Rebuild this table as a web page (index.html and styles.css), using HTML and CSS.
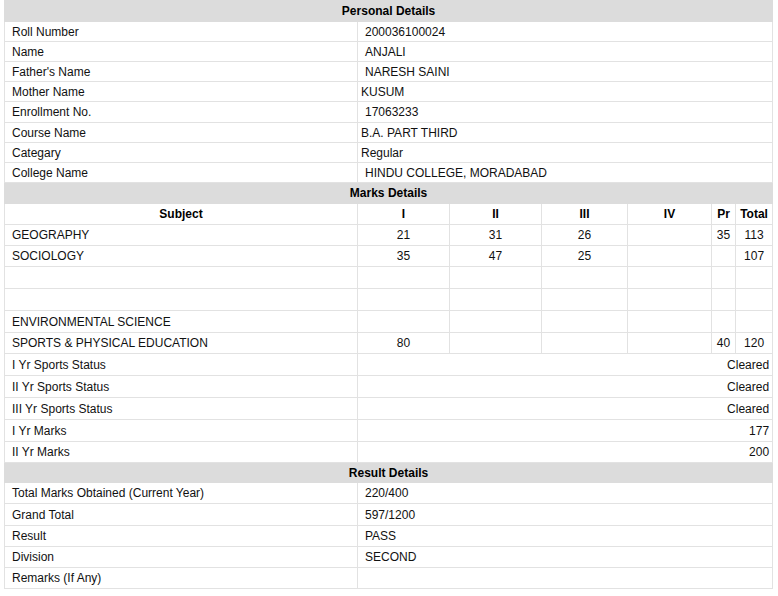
FILE: index.html
```html
<!DOCTYPE html>
<html>
<head>
<meta charset="utf-8">
<link rel="stylesheet" href="styles.css">
</head>
<body>
<div class="wrap">
<table class="result">
  <colgroup>
    <col class="c-sub"><col class="c-1"><col class="c-2"><col class="c-3"><col class="c-4"><col class="c-pr"><col class="c-tot">
  </colgroup>
  <tbody>
    <tr class="h21 sec"><td colspan="7">Personal Details</td></tr>
    <tr class="h20"><td>Roll Number</td><td colspan="6" class="val">200036100024</td></tr>
    <tr class="h20"><td>Name</td><td colspan="6" class="val">ANJALI</td></tr>
    <tr class="h20"><td>Father's Name</td><td colspan="6" class="val">NARESH SAINI</td></tr>
    <tr class="h20"><td>Mother Name</td><td colspan="6" class="val tight">KUSUM</td></tr>
    <tr class="h21"><td>Enrollment No.</td><td colspan="6" class="val">17063233</td></tr>
    <tr class="h20"><td>Course Name</td><td colspan="6" class="val tight">B.A. PART THIRD</td></tr>
    <tr class="h20"><td>Categary</td><td colspan="6" class="val tight">Regular</td></tr>
    <tr class="h20"><td>College Name</td><td colspan="6" class="val">HINDU COLLEGE, MORADABAD</td></tr>

    <tr class="h21 sec"><td colspan="7">Marks Details</td></tr>
    <tr class="h21 head"><td>Subject</td><td>I</td><td>II</td><td>III</td><td>IV</td><td>Pr</td><td>Total</td></tr>
    <tr class="h21 m"><td>GEOGRAPHY</td><td>21</td><td>31</td><td>26</td><td></td><td>35</td><td>113</td></tr>
    <tr class="h21 m"><td>SOCIOLOGY</td><td>35</td><td>47</td><td>25</td><td></td><td></td><td>107</td></tr>
    <tr class="h22 m"><td></td><td></td><td></td><td></td><td></td><td></td><td></td></tr>
    <tr class="h22 m"><td></td><td></td><td></td><td></td><td></td><td></td><td></td></tr>
    <tr class="h22 m"><td>ENVIRONMENTAL SCIENCE</td><td></td><td></td><td></td><td></td><td></td><td></td></tr>
    <tr class="h21 m"><td>SPORTS &amp; PHYSICAL EDUCATION</td><td>80</td><td></td><td></td><td></td><td>40</td><td>120</td></tr>
    <tr class="h22"><td>I Yr Sports Status</td><td colspan="6" class="right">Cleared</td></tr>
    <tr class="h22"><td>II Yr Sports Status</td><td colspan="6" class="right">Cleared</td></tr>
    <tr class="h22"><td>III Yr Sports Status</td><td colspan="6" class="right">Cleared</td></tr>
    <tr class="h22"><td>I Yr Marks</td><td colspan="6" class="right">177</td></tr>
    <tr class="h21"><td>II Yr Marks</td><td colspan="6" class="right">200</td></tr>

    <tr class="h20 sec"><td colspan="7">Result Details</td></tr>
    <tr class="h21"><td>Total Marks Obtained (Current Year)</td><td colspan="6" class="val">220/400</td></tr>
    <tr class="h22"><td>Grand Total</td><td colspan="6" class="val">597/1200</td></tr>
    <tr class="h21"><td>Result</td><td colspan="6" class="val">PASS</td></tr>
    <tr class="h21"><td>Division</td><td colspan="6" class="val">SECOND</td></tr>
    <tr class="h21"><td>Remarks (If Any)</td><td colspan="6" class="val"></td></tr>
  </tbody>
</table>
</div>
</body>
</html>
```
FILE: styles.css
```css
html, body {
  margin: 0;
  padding: 0;
  background: #fff;
}
.wrap {
  padding: 0 4px;
}
.result {
  width: 768px;
  table-layout: fixed;
  border-collapse: collapse;
  border: 1px solid #c8c8c8;
  font-family: "Liberation Sans", Arial, sans-serif;
  font-size: 12px;
  color: #111;
}
.c-sub { width: 353px; }
.c-1 { width: 92px; }
.c-2 { width: 92px; }
.c-3 { width: 86px; }
.c-4 { width: 84px; }
.c-pr { width: 24px; }
.c-tot { width: 37px; }

.result td {
  border: 1px solid #e2e2e2;
  padding: 1px 7px 0;
  vertical-align: middle;
  white-space: nowrap;
  overflow: hidden;
}
.h20 td { height: 18px; line-height: 18px; }
.h21 td { height: 19px; line-height: 19px; }
.h22 td { height: 20px; line-height: 20px; }

.sec td {
  background: #dcdcdc;
  font-weight: bold;
  text-align: center;
  border-color: #dcdcdc;
  color: #000;
}
.head td {
  font-weight: bold;
  text-align: center;
  color: #000;
}
.m td { text-align: center; }
.m td:first-child { text-align: left; }
.result td.val { padding-left: 7px; }
.result td.val.tight { padding-left: 3px; }
.result td.right { text-align: right; padding-right: 3px; }
.m td:nth-child(6), .head td:nth-child(6) { padding-left: 0; padding-right: 0; }
.m td:nth-child(7), .head td:nth-child(7) { padding-left: 0; padding-right: 0; }
```
